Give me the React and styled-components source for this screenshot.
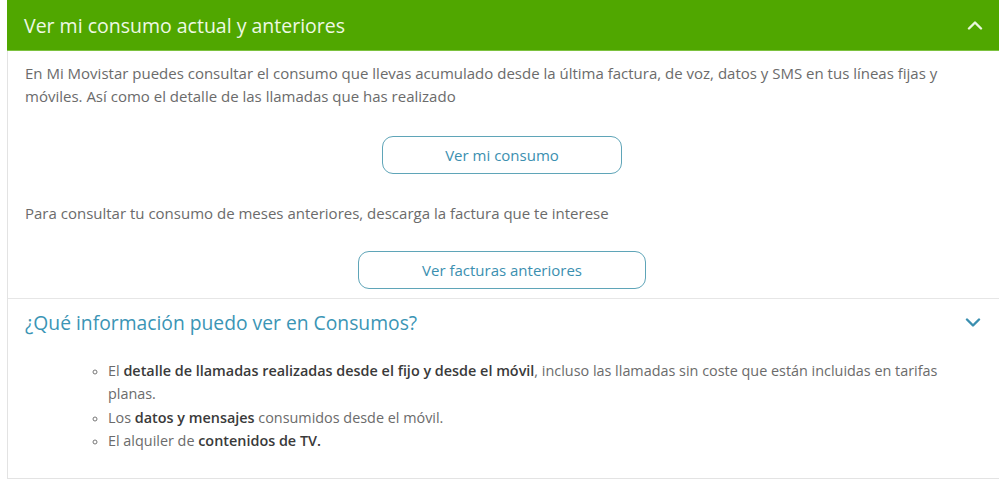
import React from 'react';
import styled, { createGlobalStyle } from 'styled-components';

const GlobalStyle = createGlobalStyle`
    html, body {
        margin: 0;
        padding: 0;
        background: #ffffff;
    }
    body {
        font-family: "Open Sans", Lato, sans-serif;
        -webkit-font-smoothing: antialiased;
    }
`;

const ChevronIcon = ({ up, color }) => (
    <svg width="16" height="10" viewBox="0 0 16 10" fill="none">
        <path
            d={up ? 'M2 8.5 L8 2.5 L14 8.5' : 'M2 1.5 L8 7.5 L14 1.5'}
            stroke={color}
            strokeWidth="2.4"
            strokeLinecap="round"
            strokeLinejoin="round"
        />
    </svg>
);

const App = () => (
    <>
        <GlobalStyle />
        <Page>
            <Panel>
                <Header>
                    <HeaderTitle>Ver mi consumo actual y anteriores</HeaderTitle>
                    <ChevronIcon up color="#e9f7dc" />
                </Header>
                <Body>
                    <Paragraph>
                        En Mi Movistar puedes consultar el consumo que llevas acumulado desde la última factura, de voz, datos y SMS en tus líneas fijas y móviles. Así como el detalle de las llamadas que has realizado
                    </Paragraph>
                    <ButtonRow $top={28} $bottom={28}>
                        <OutlineButton $width={240}>Ver mi consumo</OutlineButton>
                    </ButtonRow>
                    <Paragraph>
                        Para consultar tu consumo de meses anteriores, descarga la factura que te interese
                    </Paragraph>
                    <ButtonRow $top={26} $bottom={9}>
                        <OutlineButton $width={288}>Ver facturas anteriores</OutlineButton>
                    </ButtonRow>
                </Body>
                <SubSection>
                    <SubHeader>
                        <SubTitle>¿Qué información puedo ver en Consumos?</SubTitle>
                        <ChevronIcon color="#3b8fb0" />
                    </SubHeader>
                    <InfoList>
                        <li>
                            El <Strong>detalle de llamadas realizadas desde el fijo y desde el móvil</Strong>, incluso las llamadas sin coste que están incluidas en tarifas planas.
                        </li>
                        <li>
                            Los <Strong>datos y mensajes</Strong> consumidos desde el móvil.
                        </li>
                        <li>
                            El alquiler de <Strong>contenidos de TV.</Strong>
                        </li>
                    </InfoList>
                </SubSection>
            </Panel>
        </Page>
    </>
);

const Page = styled.div`
    width: 999px;
    height: 480px;
    overflow: hidden;
    padding-left: 7px;
    box-sizing: border-box;
`;

const Panel = styled.div`
    border-left: 1px solid #e3e3e3;
    border-bottom: 1px solid #e3e3e3;
    height: 479px;
    box-sizing: border-box;
    display: flex;
    flex-direction: column;
`;

const Header = styled.div`
    height: 51px;
    flex-shrink: 0;
    background-color: #50a700;
    border-bottom: 1px solid #7cc23f;
    box-sizing: border-box;
    display: flex;
    align-items: center;
    justify-content: space-between;
    padding: 0 16px 0 17px;
    margin-left: -1px;
`;

const HeaderTitle = styled.h2`
    margin: 0;
    font-weight: 400;
    font-size: 19.5px;
    color: #eef9e4;
`;

const Body = styled.div`
    padding: 11px 20px 0 17px;
`;

const Paragraph = styled.p`
    margin: 0;
    font-size: 15px;
    line-height: 23px;
    color: #6b6b6b;
`;

const ButtonRow = styled.div`
    display: flex;
    justify-content: center;
    padding: ${({ $top }) => $top}px 0 ${({ $bottom }) => $bottom}px;
`;

const OutlineButton = styled.button`
    width: ${({ $width }) => $width}px;
    height: 38px;
    border: 1.5px solid #5fa5b8;
    border-radius: 11px;
    background: #ffffff;
    color: #3b8fb0;
    font-family: "Open Sans", Lato, sans-serif;
    font-size: 15px;
    cursor: pointer;
`;

const SubSection = styled.div`
    border-top: 1px solid #e6e6e6;
    flex: 1;
`;

const SubHeader = styled.div`
    display: flex;
    align-items: center;
    justify-content: space-between;
    padding: 10px 18px 0 17px;
`;

const SubTitle = styled.h3`
    margin: 0;
    font-weight: 400;
    font-size: 19.3px;
    line-height: 28px;
    color: #3b95b5;
`;

const InfoList = styled.ul`
    margin: 22px 0 0;
    padding: 0 30px 0 100px;
    list-style: circle;
    font-size: 14.4px;
    line-height: 23.3px;
    color: #6b6b6b;

    li::marker {
        font-size: 11px;
        color: #777777;
    }
`;

const Strong = styled.strong`
    font-weight: 600;
    color: #3a3a3a;
`;

export default App;
